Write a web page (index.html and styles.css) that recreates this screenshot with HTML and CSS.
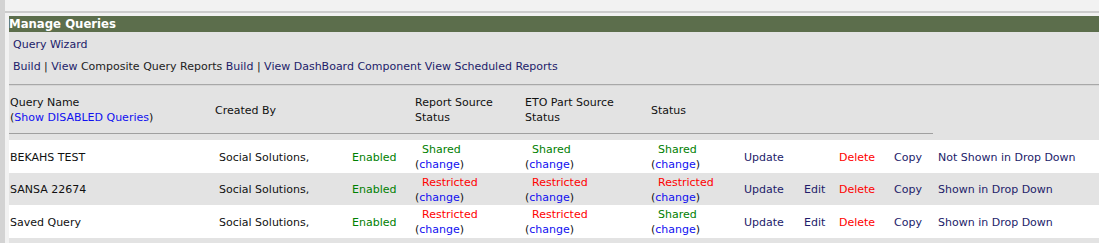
FILE: index.html
```html
<!DOCTYPE html>
<html lang="en">
<head>
  <meta charset="UTF-8">
  <title>Manage Queries</title>
  <link rel="stylesheet" href="styles.css">
</head>
<body>
  <div class="frame">
    <div class="top-rule"></div>
    <div class="panel">
      <h2 class="panel-title">Manage Queries</h2>
      <div class="links">
        <div class="link-line"><a href="#">Query Wizard</a></div>
        <div class="link-line">
          <a href="#">Build</a> | <a href="#">View</a> Composite Query Reports
          <a href="#">Build</a> | <a href="#">View DashBoard Component</a>
          <a href="#">View Scheduled Reports</a>
        </div>
      </div>
      <hr class="divider">

      <table class="queries">
        <colgroup>
          <col class="c-name">
          <col class="c-author">
          <col class="c-enabled">
          <col class="c-report">
          <col class="c-eto">
          <col class="c-status">
          <col class="c-update">
          <col class="c-edit">
          <col class="c-delete">
          <col class="c-copy">
          <col class="c-drop">
        </colgroup>
        <thead>
          <tr>
            <th class="h-name">Query Name<br>(<a class="blue" href="#">Show DISABLED Queries</a>)</th>
            <th colspan="2" class="h-author">Created By</th>
            <th>Report Source<br>Status</th>
            <th>ETO Part Source<br>Status</th>
            <th>Status</th>
            <th colspan="4"></th>
            <th class="h-empty"></th>
          </tr>
        </thead>
        <tbody>
          <tr class="spacer"><td colspan="11"></td></tr>
          <tr class="row-white">
            <td class="name">BEKAHS TEST</td>
            <td class="author">Social Solutions,</td>
            <td class="enabled">Enabled</td>
            <td class="access"><span class="shared">Shared</span>(<a class="blue" href="#">change</a>)</td>
            <td class="access"><span class="shared">Shared</span>(<a class="blue" href="#">change</a>)</td>
            <td class="access"><span class="shared">Shared</span>(<a class="blue" href="#">change</a>)</td>
            <td class="act"><a href="#">Update</a></td>
            <td class="act"></td>
            <td class="act"><a class="red" href="#">Delete</a></td>
            <td class="act"><a href="#">Copy</a></td>
            <td class="drop"><a href="#">Not Shown in Drop Down</a></td>
          </tr>
          <tr class="row-gray">
            <td class="name">SANSA 22674</td>
            <td class="author">Social Solutions,</td>
            <td class="enabled">Enabled</td>
            <td class="access"><span class="restricted">Restricted</span>(<a class="blue" href="#">change</a>)</td>
            <td class="access"><span class="restricted">Restricted</span>(<a class="blue" href="#">change</a>)</td>
            <td class="access"><span class="restricted">Restricted</span>(<a class="blue" href="#">change</a>)</td>
            <td class="act"><a href="#">Update</a></td>
            <td class="act"><a href="#">Edit</a></td>
            <td class="act"><a class="red" href="#">Delete</a></td>
            <td class="act"><a href="#">Copy</a></td>
            <td class="drop"><a href="#">Shown in Drop Down</a></td>
          </tr>
          <tr class="row-white">
            <td class="name">Saved Query</td>
            <td class="author">Social Solutions,</td>
            <td class="enabled">Enabled</td>
            <td class="access"><span class="restricted">Restricted</span>(<a class="blue" href="#">change</a>)</td>
            <td class="access"><span class="restricted">Restricted</span>(<a class="blue" href="#">change</a>)</td>
            <td class="access"><span class="shared">Shared</span>(<a class="blue" href="#">change</a>)</td>
            <td class="act"><a href="#">Update</a></td>
            <td class="act"><a href="#">Edit</a></td>
            <td class="act"><a class="red" href="#">Delete</a></td>
            <td class="act"><a href="#">Copy</a></td>
            <td class="drop"><a href="#">Shown in Drop Down</a></td>
          </tr>
        </tbody>
      </table>
    </div>
  </div>
</body>
</html>
```

FILE: styles.css
```css
html, body {
  margin: 0;
  height: 100%;
}

body {
  background: #f2f2f2;
  font-family: "DejaVu Sans", sans-serif;
  font-size: 11px;
  color: #111;
}

a {
  color: #221c6a;
  text-decoration: none;
}

a.blue {
  color: #1010f0;
}

a.red {
  color: #ff0000;
}

.frame {
  min-height: 100%;
  box-sizing: border-box;
  border-left: 5px solid #d3d3d3;
  padding-top: 11px;
}

.top-rule {
  border-top: 2px solid #cccccc;
  margin-bottom: 3px;
}

.panel {
  margin-left: 4px;
  background: #e3e3e3;
  min-height: 227px;
}

.panel-title {
  margin: 0;
  height: 16px;
  line-height: 16px;
  background: #5c6e4c;
  color: #fff;
  font-family: "DejaVu Sans Condensed", "DejaVu Sans", sans-serif;
  font-stretch: condensed;
  font-size: 13px;
  font-weight: bold;
}

.links {
  padding: 2px 0 0 4px;
}

.link-line {
  line-height: 22px;
  color: #222;
}

.divider {
  margin: 6px 0 0;
  border: none;
  border-top: 1px solid #a8a8a8;
  border-bottom: 1px solid #d6d6d6;
  height: 0;
}

.queries {
  width: 100%;
  table-layout: fixed;
  border-collapse: collapse;
}

.c-name { width: 204px; }
.c-author { width: 132px; }
.c-enabled { width: 68px; }
.c-report { width: 110px; }
.c-eto { width: 126px; }
.c-status { width: 93px; }
.c-update { width: 60px; }
.c-edit { width: 35px; }
.c-delete { width: 55px; }
.c-copy { width: 41px; }

.queries th {
  font-weight: normal;
  text-align: left;
  vertical-align: middle;
  line-height: 15px;
  padding: 9px 2px 8px;
  border-bottom: 1px solid #a0a0a0;
  color: #111;
}

.queries th.h-name {
  padding-left: 1px;
}

.queries th.h-empty {
  border-bottom: none;
}

.queries td {
  line-height: 15px;
  padding: 2px 2px 0.5px;
  vertical-align: middle;
  white-space: nowrap;
}

.queries .spacer td {
  height: 6px;
  padding: 0;
}

.row-white {
  background: #fff;
}

.row-gray {
  background: #e3e3e3;
}

.queries td.name {
  padding-left: 1px;
}

.queries td.author {
  padding-left: 6px;
}

.queries td.enabled {
  padding-left: 7px;
  color: #008000;
}

.queries td.drop {
  padding-left: 5px;
}

.access span {
  display: block;
  margin-left: 7px;
}

.shared {
  color: #008000;
}

.restricted {
  color: #ff0000;
}
```
